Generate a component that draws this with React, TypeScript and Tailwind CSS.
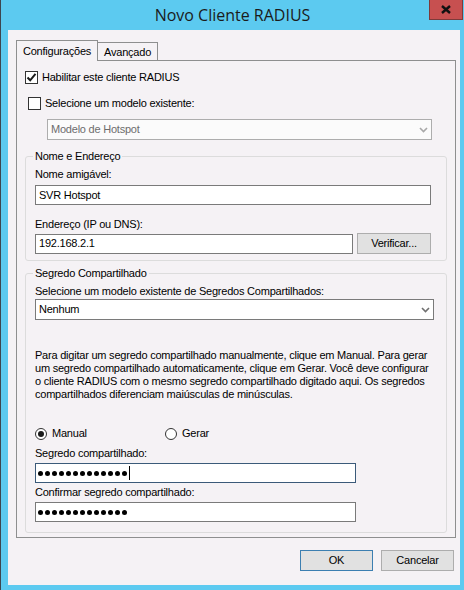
import React from 'react';

const font = { fontFamily: '"Liberation Sans", Arial, sans-serif' };

function Chevron({ color = '#606060' }: { color?: string }) {
  return (
    <svg width="9" height="6" viewBox="0 0 9 6" className="shrink-0">
      <path d="M1 1 L4.5 4.5 L8 1" fill="none" stroke={color} strokeWidth="1.6" />
    </svg>
  );
}

function Checkbox({ checked }: { checked?: boolean }) {
  return (
    <div className="w-[13px] h-[13px] border border-[#333333] bg-white flex items-center justify-center shrink-0">
      {checked && (
        <svg width="11" height="11" viewBox="0 0 11 11">
          <path d="M1.5 5.5 L4.2 8.3 L9.5 1.8" fill="none" stroke="#1a1a1a" strokeWidth="2" />
        </svg>
      )}
    </div>
  );
}

function Radio({ checked }: { checked?: boolean }) {
  return (
    <div className="w-[12px] h-[12px] rounded-full border border-[#333333] bg-white flex items-center justify-center shrink-0">
      {checked && <div className="w-[6px] h-[6px] rounded-full bg-[#1a1a1a]" />}
    </div>
  );
}

function Dots() {
  return (
    <div className="flex gap-[2px]">
      {Array.from({ length: 13 }).map((_, i) => (
        <div key={i} className="w-[5px] h-[5px] rounded-full bg-black" />
      ))}
    </div>
  );
}

function Group({ title, className, children }: { title: string; className?: string; children: React.ReactNode }) {
  return (
    <div className={`relative border border-[#dcdcdc] rounded-[3px] ${className ?? ''}`}>
      <span className="absolute -top-[8px] left-[7px] px-[2px] bg-[#f5f2f5] text-[11px] leading-[14px] text-black">
        {title}
      </span>
      {children}
    </div>
  );
}

export default function App() {
  return (
    <div className="w-[464px] h-[590px] bg-[#5ccaf0] flex flex-col border-l border-[#3d4650]" style={font}>
      {/* title bar */}
      <div className="h-[30px] flex items-start relative shrink-0">
        <div className="flex-1 text-center pt-[5px] text-[16px] leading-[20px] text-[#1b1b1b]" style={{ fontFamily: '"Open Sans", "Noto Sans", sans-serif' }}>
          Novo Cliente RADIUS
        </div>
        <div className="absolute right-[1px] top-0 w-[34px] h-[20px] bg-[#c75050] border border-[#7d3a3a] border-t-0 flex items-center justify-center">
          <svg width="10" height="9" viewBox="0 0 10 9">
            <path d="M1 1 L9 8 M9 1 L1 8" stroke="#111" strokeWidth="2.4" />
          </svg>
        </div>
      </div>

      {/* client area */}
      <div className="ml-[7px] mr-[4px] mb-[5px] flex-1 bg-[#f5f2f5] flex flex-col text-[11px] tracking-[-0.22px] text-black">
        {/* tabs */}
        <div className="flex items-end mt-[10px] ml-[8px] h-[21px] relative z-10">
          <div className="h-[21px] px-[6px] border border-[#8e8f8f] border-b-0 bg-[#f5f2f5] flex items-center leading-[14px]">
            Configurações
          </div>
          <div className="h-[18px] mb-[1px] px-[6px] border border-l-0 border-[#8e8f8f] border-b-0 bg-[#f5f2f5] flex items-center leading-[14px]">
            Avançado
          </div>
        </div>

        {/* panel */}
        <div className="ml-[8px] w-[440px] h-[478px] -mt-[1px] border border-[#8e8f8f] flex flex-col">
          <div className="flex items-center gap-[4px] ml-[8px] mt-[10px] h-[13px]">
            <Checkbox checked />
            <span className="leading-[13px]">Habilitar este cliente RADIUS</span>
          </div>
          <div className="flex items-center gap-[4px] ml-[11px] mt-[13px] h-[13px]">
            <Checkbox />
            <span className="leading-[13px]">Selecione um modelo existente:</span>
          </div>
          <div className="ml-[30px] mt-[9px] w-[385px] h-[21px] border border-[#adadad] bg-[#fbfbfb] flex items-center px-[3px] justify-between">
            <span className="text-[#6d6d6d]">Modelo de Hotspot</span>
            <Chevron color="#a8a8a8" />
          </div>

          <Group title="Nome e Endereço" className="ml-[8px] mt-[16px] w-[422px] h-[105px]">
            <div className="ml-[9px] mt-[11px] leading-[13px]">Nome amigável:</div>
            <div className="ml-[9px] mt-[4px] w-[396px] h-[20px] border border-[#7a7a7a] bg-white flex items-center px-[3px]">
              SVR Hotspot
            </div>
            <div className="ml-[9px] mt-[13px] leading-[13px]">Endereço (IP ou DNS):</div>
            <div className="ml-[9px] mt-[2px] flex items-center gap-[4px]">
              <div className="w-[318px] h-[20px] border border-[#7a7a7a] bg-white flex items-center px-[3px]">
                192.168.2.1
              </div>
              <div className="w-[74px] h-[21px] border border-[#adadad] bg-[#e1e1e1] flex items-center justify-center">
                Verificar...
              </div>
            </div>
          </Group>

          <Group title="Segredo Compartilhado" className="ml-[8px] mt-[12px] w-[422px] h-[260px]">
            <div className="ml-[9px] mt-[11px] leading-[13px]">Selecione um modelo existente de Segredos Compartilhados:</div>
            <div className="ml-[9px] mt-[1px] w-[399px] h-[21px] border border-[#7a7a7a] bg-white flex items-center px-[3px] justify-between">
              <span>Nenhum</span>
              <Chevron color="#707070" />
            </div>
            <p className="ml-[9px] mt-[29px] w-[400px] leading-[13px]">
              Para digitar um segredo compartilhado manualmente, clique em Manual. Para gerar um segredo compartilhado automaticamente, clique em Gerar. Você deve configurar o cliente RADIUS com o mesmo segredo compartilhado digitado aqui. Os segredos compartilhados diferenciam maiúsculas de minúsculas.
            </p>
            <div className="ml-[9px] mt-[26px] flex items-center h-[13px]">
              <div className="flex items-center gap-[5px] w-[130px]">
                <Radio checked />
                <span>Manual</span>
              </div>
              <div className="flex items-center gap-[5px]">
                <Radio />
                <span>Gerar</span>
              </div>
            </div>
            <div className="ml-[9px] mt-[7px] leading-[13px]">Segredo compartilhado:</div>
            <div className="ml-[9px] mt-[3px] w-[321px] h-[20px] border border-[#3b5a79] bg-white flex items-center px-[2px] gap-[2px]">
              <Dots />
              <span className="w-px h-[14px] bg-black" />
            </div>
            <div className="ml-[9px] mt-[3px] leading-[13px]">Confirmar segredo compartilhado:</div>
            <div className="ml-[9px] mt-[3px] w-[321px] h-[20px] border border-[#7a7a7a] bg-white flex items-center px-[2px]">
              <Dots />
            </div>
          </Group>
        </div>

        {/* buttons */}
        <div className="flex justify-end gap-[8px] mt-[12px] mr-[6px]">
          <div className="w-[73px] h-[21px] border border-[#3c7fb1] bg-[#e1e1e1] flex items-center justify-center">OK</div>
          <div className="w-[73px] h-[21px] border border-[#adadad] bg-[#e1e1e1] flex items-center justify-center">Cancelar</div>
        </div>
      </div>
    </div>
  );
}
